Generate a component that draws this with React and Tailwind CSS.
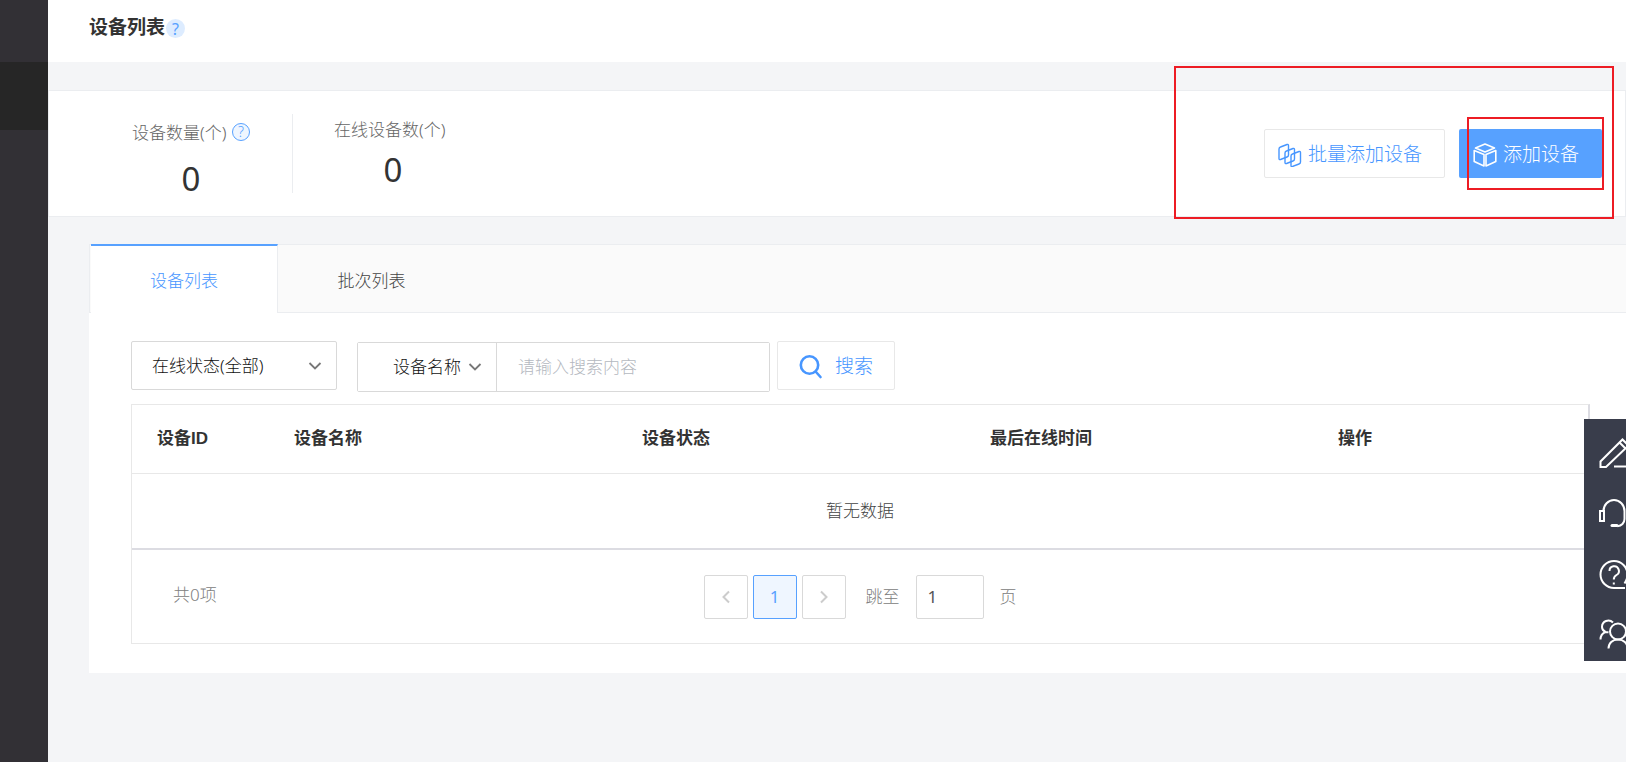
import { useState } from "react";

const ChevronDown = ({ className }) => (
  <svg viewBox="0 0 14 14" fill="none" stroke="#777" strokeWidth={1.8} className={className}>
    <path d="M1.5 4 7 9.500 12.500 4" />
  </svg>
);

const BatchIcon = () => (
  <svg viewBox="0 0 24 24" fill="none" stroke="currentColor" strokeWidth={1.4} strokeLinejoin="round" className="size-6">
    <path d="M1 6c0-1 .5-1.700 1.500-2L9 1.500c1-.4 1.500 0 1.500 1V12c0 1-.5 1.700-1.500 2l-6.500 2.500c-1 .3-1.500 0-1.500-1z" />
    <path d="M7 10c0-1 .5-1.700 1.500-2L15 5.500c1-.4 1.500 0 1.500 1V16c0 1-.5 1.700-1.500 2l-6.500 2.500c-1 .3-1.500 0-1.500-1z" />
    <path d="M13 13c0-1 .5-1.700 1.500-2L21 8.500c1-.4 1.500 0 1.500 1V19c0 1-.5 1.700-1.500 2l-6.500 2.500c-1 .3-1.500 0-1.500-1z" />
  </svg>
);

const CubeIcon = () => (
  <svg viewBox="0 0 24 24" fill="none" stroke="currentColor" strokeWidth={1.6} strokeLinejoin="round" className="size-6">
    <path d="m12 1 9.500 4L12 9 2.500 5z" />
    <path d="M1.200 7.500 11 11.500V23l-9.800-4.500z" />
    <path d="M22.800 7.500 13 11.500V23l9.800-4.500z" />
  </svg>
);

const SearchIcon = () => (
  <svg viewBox="0 0 24 24" fill="none" stroke="currentColor" strokeWidth={2.6} strokeLinecap="round" className="size-6">
    <circle cx="10.500" cy="10" r="8.7" />
    <path d="m17 17 4.500 5" />
  </svg>
);

const tools = [
  {
    label: "反馈",
    icon: (
      <>
        <path d="M1.500 29v-5.500L23.500 1.500l6 6L7 29z" />
        <path d="m20.500 4.500 6 6" />
        <path d="M15 28.500h15" />
      </>
    ),
  },
  {
    label: "客服",
    icon: (
      <>
        <path d="M4.500 13a10.500 11 0 0 1 21 0v8c0 4-3 7-7 7.200" />
        <path d="M1 13h4v10H1z" />
        <path d="M13 27.500h5" strokeWidth={3} strokeLinecap="round" />
      </>
    ),
  },
  {
    label: "帮助",
    icon: (
      <>
        <path d="M26 30H15a13.500 13.500 0 1 1 13.500-13.500c0 4-1 6-3 9" />
        <path d="M10.500 13a4.700 4.700 0 1 1 7 4c-2 1.200-2.700 2-2.700 4.500M14.800 24.500v2" />
      </>
    ),
  },
  {
    label: "社区",
    icon: (
      <>
        <circle cx="19" cy="13.500" r="8" />
        <path d="M9.500 30.500c0-5.500 4-9 9.500-9s9.500 3.500 9.500 9" />
        <path d="M14 4.500C10 .5 3 3 3 9c0 2.500 1.500 4 3.500 5C3 15.500 1.500 18 1.500 21.500M6.500 14.200h3" />
      </>
    ),
  },
];

const Sidebar = () => (
  <aside className="w-12 shrink-0 bg-[#323035] pt-[62px]">
    <div className="h-[68px] bg-[#262626]" />
  </aside>
);

const Header = () => (
  <header className="flex h-[62px] items-start bg-white pt-[14px] pl-[41px]">
    <h1 className="text-[19px] leading-[26px] font-bold text-[#333]">设备列表</h1>
    <button
      aria-label="帮助"
      className="mt-[5px] ml-px flex size-[19px] items-center justify-center rounded-full bg-[#ddecff] text-[16px] leading-5 font-normal text-[#57a1ff]"
    >
      ?
    </button>
  </header>
);

const Summary = () => (
  <section className="relative mt-7 flex items-start justify-between border border-[#ebedf0] bg-white py-[23px] pr-[23px] pl-[41px]">
    <div className="flex h-[79px]">
      <div className="border-r border-[#ebedf0] px-[42px] pt-[7px]">
        <div className="w-[118px]">
          <div className="flex items-start justify-between text-[17px] leading-6 text-[#666]">
            设备数量(个)
            <button
              aria-label="设备数量说明"
              className="mt-[2px] flex size-[18px] items-center justify-center rounded-full border border-[#57a1ff] bg-[#eff6ff] text-[14px] leading-4 text-[#57a1ff]"
            >
              ?
            </button>
          </div>
          <p className="mt-1 text-center text-[33px] leading-[60px] font-normal text-[#333]">0</p>
        </div>
      </div>
      <div className="px-[41px] pt-1">
        <div className="w-[118px]">
          <div className="text-[17px] leading-6 text-[#666]">在线设备数(个)</div>
          <p className="text-center text-[33px] leading-[56px] font-normal text-[#333]">0</p>
        </div>
      </div>
    </div>
    <div className="flex gap-[14px] pt-[15px] text-[19px]">
      <button className="flex h-[49px] items-center gap-[6px] rounded-xs border border-[#e8e8e8] bg-white pt-[2px] pr-[22px] pl-[13px] text-[#4796ff]">
        <BatchIcon />
        批量添加设备
      </button>
      <button className="flex h-[49px] items-center gap-[6px] rounded-xs bg-[#57a1ff] pt-[2px] pr-[23px] pl-[14px] text-white">
        <CubeIcon />
        添加设备
      </button>
    </div>
    {/* red markers over the add buttons */}
    <div className="pointer-events-none absolute -top-[25px] right-[11px] h-[153px] w-[440px] border-2 border-[#ed1c24]" />
    <div className="pointer-events-none absolute top-[26px] right-[21px] h-[73px] w-[137px] border-2 border-[#ed1c24]" />
  </section>
);

const Filters = () => {
  const [keyword, setKeyword] = useState("");

  return (
    <form className="flex items-start text-[17px] text-[#111]" onSubmit={(e) => e.preventDefault()}>
      <div className="relative">
        <select
          aria-label="在线状态"
          className="h-[49px] w-[206px] appearance-none rounded-xs border border-[#d9d9d9] bg-white px-5 focus:outline-none"
        >
          <option>在线状态(全部)</option>
          <option>在线</option>
          <option>离线</option>
        </select>
        <ChevronDown className="pointer-events-none absolute top-[18px] right-[15px] size-[14px]" />
      </div>
      <div className="mt-px ml-5 flex h-[50px] rounded-xs border border-[#d9d9d9]">
        <div className="relative">
          <select
            aria-label="搜索字段"
            className="h-full w-[139px] appearance-none border-r border-[#d9d9d9] bg-white pl-[35px] focus:outline-none"
          >
            <option>设备名称</option>
            <option>设备ID</option>
          </select>
          <ChevronDown className="pointer-events-none absolute top-[17px] right-[15px] size-[14px]" />
        </div>
        <input
          type="text"
          aria-label="搜索内容"
          className="w-[272px] bg-white px-[21px] placeholder:text-[#b4b8c0] focus:outline-none"
          placeholder="请输入搜索内容"
          value={keyword}
          onChange={(e) => setKeyword(e.target.value)}
        />
      </div>
      <button className="ml-[7px] flex h-[49px] w-[118px] items-center justify-center gap-3 rounded-xs border border-[#e8e8e8] pt-[2px] text-[19px] text-[#4796ff]">
        <SearchIcon />
        搜索
      </button>
    </form>
  );
};

const Pager = () => {
  const [page, setPage] = useState("1");

  return (
    <div className="grid h-[93px] grid-cols-[1fr_auto_1fr] items-center text-[17px] text-[#808080]">
      <span className="pb-1 pl-[41px]">共0项</span>
      <div className="flex items-center">
        <div className="flex gap-[5px]">
          <button aria-label="上一页" className="flex size-11 items-center justify-center rounded-xs border border-[#d9d9d9]">
            <svg viewBox="0 0 14 14" fill="none" stroke="#ccc" strokeWidth={2} className="size-[14px]">
              <path d="M10 1.500 4.500 7l5.500 5.500" />
            </svg>
          </button>
          <button className="size-11 rounded-xs border border-[#57a1ff] bg-[#eff6ff] font-normal text-[#57a1ff]">1</button>
          <button aria-label="下一页" className="flex size-11 items-center justify-center rounded-xs border border-[#d9d9d9]">
            <svg viewBox="0 0 14 14" fill="none" stroke="#ccc" strokeWidth={2} className="size-[14px]">
              <path d="M4 1.500 9.500 7 4 12.500" />
            </svg>
          </button>
        </div>
        <label className="ml-5 flex items-center gap-4">
          跳至
          <input
            type="text"
            className="h-11 w-[68px] rounded-xs border border-[#d9d9d9] px-[11px] font-normal text-[#555] focus:outline-none"
            value={page}
            onChange={(e) => setPage(e.target.value)}
          />
          页
        </label>
      </div>
    </div>
  );
};

const DeviceTable = () => (
  <div className="mt-3 border border-[#e8e8e8] border-r-2 border-r-[#dcdce2]">
    <table className="w-full table-fixed text-[17px]">
      <thead className="font-['Liberation_Sans','Noto_Sans_CJK_SC',sans-serif]">
        <tr className="h-[68px] border-b border-[#e8e8e8] text-left text-[#333]">
          <th className="w-[137px] pl-[25px]">设备ID</th>
          <th className="w-[23.9%] pl-[25px]">设备名称</th>
          <th className="w-[23.9%] pl-[25px]">设备状态</th>
          <th className="w-[23.9%] pl-[25px]">最后在线时间</th>
          <th className="pl-[25px]">操作</th>
        </tr>
      </thead>
      <tbody>
        <tr className="h-[76px] border-b-2 border-[#dcdce2] text-center text-[#444]">
          <td colSpan={5}>暂无数据</td>
        </tr>
      </tbody>
    </table>
    <Pager />
  </div>
);

const DevicePanel = () => (
  <section className="mt-[27px] ml-[41px] bg-white pb-[29px]">
    <div role="tablist" className="flex h-[69px] border border-r-0 border-[#ebedf0] bg-[#fafafa] pl-px text-[17px]">
      <button
        role="tab"
        aria-selected="true"
        className="-mt-px -mb-px w-[187px] border-t-2 border-r border-t-[#57a1ff] border-r-[#ebedf0] bg-white pt-[2px] text-[#4796ff]"
      >
        设备列表
      </button>
      <button role="tab" aria-selected="false" className="w-[187px] pt-1 text-[#444]">
        批次列表
      </button>
    </div>
    <div className="pt-7 pr-9 pl-[42px]">
      <Filters />
      <DeviceTable />
    </div>
  </section>
);

const FloatingTools = () => (
  <nav className="fixed top-[419px] right-0 flex w-[42px] flex-col gap-[30px] overflow-hidden bg-[#393d4b] pt-[19px] pb-[13px] pl-[15px]">
    {tools.map((tool) => (
      <button key={tool.label} aria-label={tool.label} className="size-[30px] shrink-0 text-white">
        <svg viewBox="0 0 30 30" fill="none" stroke="currentColor" strokeWidth={2} className="size-[30px] overflow-visible">
          {tool.icon}
        </svg>
      </button>
    ))}
  </nav>
);

export default function App() {
  return (
    <div className="flex min-h-screen bg-[#f4f5f7] font-['Noto_Sans','Noto_Sans_CJK_SC',sans-serif] font-light">
      <Sidebar />
      <main className="min-w-0 flex-1">
        <Header />
        <Summary />
        <DevicePanel />
      </main>
      <FloatingTools />
    </div>
  );
}
